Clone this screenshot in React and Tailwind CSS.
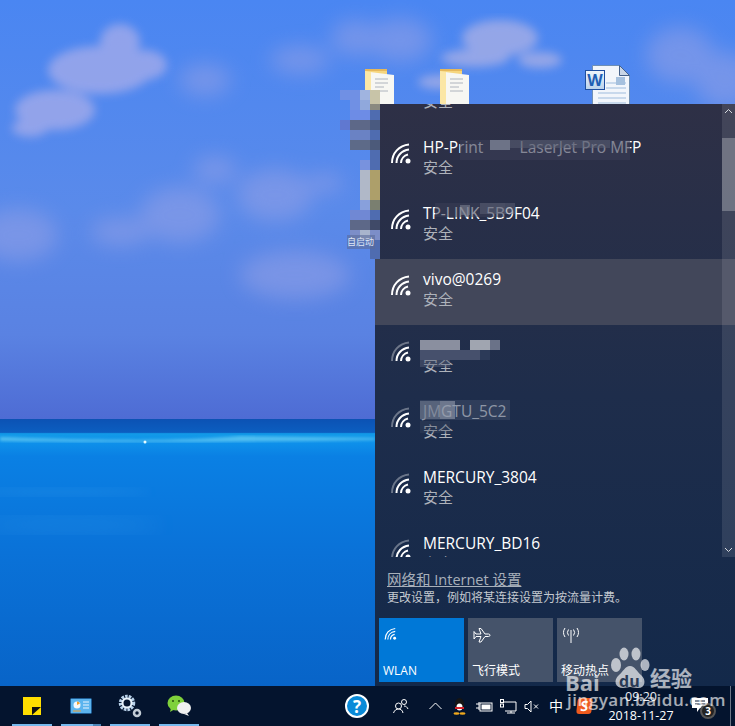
const FONT = { fontFamily: '"Open Sans","Noto Sans CJK SC",sans-serif' };

function Wifi({ level = 4, size = 22 }) {
  return (
    <svg width={size} height={size} viewBox="0 0 22 22" fill="none" stroke="white" strokeWidth="2">
      <path d="M2 21C2 11 9 3.500 19 2.500" opacity={level >= 4 ? 1 : 0.35} />
      <path d="M6.500 21C6.500 14 11.500 8.500 19 7.500" />
      <path d="M11 21C11 17 14 13.500 18 12.500" />
      <circle cx="18" cy="19" r="2.500" fill="white" stroke="none" />
    </svg>
  );
}

function Blocks({ items }) {
  return items.map(([x, y, w, h, c], i) => (
    <div key={i} className="absolute" style={{ left: x, top: y, width: w, height: h, background: c }} />
  ));
}

function Row({ name, level, active, blocks, dim }) {
  return (
    <div className={`relative flex h-[66px] shrink-0 items-start pl-[15px] pt-[9px] ${active ? "bg-[#42475a]" : ""}`}>
      <div className="mt-[6px] h-[22px] w-[22px]"><Wifi level={level} /></div>
      <div className="ml-[11px] flex flex-col">
        <span className={`h-[21px] whitespace-pre text-[15.500px] leading-[22px] ${dim ? "text-[#c8ccd4]" : "text-white"}`}>{name}</span>
        <span className="text-[15px] leading-[20px] text-[#aeb2ba]">安全</span>
      </div>
      {blocks && <Blocks items={blocks} />}
    </div>
  );
}

function Tile({ label, blue, children }) {
  return (
    <div className={`flex h-[64px] w-[85px] flex-col justify-between px-[4px] pb-[3px] pt-[9px] ${blue ? "bg-[#0078d7]" : "bg-[#45536a]"}`}>
      <div className="h-[24px] pl-[1px]">{children}</div>
      <span className="text-[12px] leading-[16px] text-white">{label}</span>
    </div>
  );
}

function TaskItem({ children, tail }) {
  return (
    <div className="relative flex h-10 w-[40px] items-center justify-center">
      {children}
      <div className="absolute bottom-0 left-0 h-[2px] w-full bg-[#76b9ed]" />
      {tail && <div className="absolute bottom-0 right-0 h-[2px] w-[8px] bg-[#4c86b8]" />}
    </div>
  );
}

function Folder() {
  return (
    <svg width="32" height="36" viewBox="0 0 32 36">
      <path d="M1 1h22v35H1z" fill="#f6d67e" />
      <path d="M1 1h22v2H1z" fill="#e6b85c" />
      <path d="M6 4l24 3v29H6z" fill="#f7f7f3" />
      <path d="M11 11h13M11 15h13M11 19h9M11 23h13" stroke="#aeb4bd" strokeWidth="1" />
      <path d="M1 3l6 1v32H1z" fill="#fbe7a6" />
    </svg>
  );
}

function Sky() {
  return (
    <svg className="absolute inset-0" width="735" height="686" viewBox="0 0 735 686">
      <defs>
        <linearGradient id="sky" x1="0" y1="0" x2="0" y2="1">
          <stop offset="0" stopColor="#4a86f2" />
          <stop offset="0.5" stopColor="#5a8aea" />
          <stop offset="0.8" stopColor="#5a82e2" />
          <stop offset="1" stopColor="#4e6cd4" />
        </linearGradient>
        <linearGradient id="sea" x1="0" y1="0" x2="0" y2="1">
          <stop offset="0" stopColor="#0c52b4" />
          <stop offset="0.05" stopColor="#0c5ec0" />
          <stop offset="0.055" stopColor="#129ae8" />
          <stop offset="0.09" stopColor="#0e90ea" />
          <stop offset="0.14" stopColor="#0a80e4" />
          <stop offset="0.5" stopColor="#0a72d8" />
          <stop offset="1" stopColor="#0864c8" />
        </linearGradient>
        <filter id="b1"><feGaussianBlur stdDeviation="10" /></filter>
        <filter id="b2"><feGaussianBlur stdDeviation="1.500" /></filter>
        <filter id="b3"><feGaussianBlur stdDeviation="5" /></filter>
      </defs>
      <rect width="735" height="419" fill="url(#sky)" />
      <rect y="419" width="735" height="267" fill="url(#sea)" />
      <g filter="url(#b3)" fill="#a2aaea" opacity="0.8">
        <ellipse cx="120" cy="42" rx="20" ry="18" />
        <ellipse cx="100" cy="70" rx="52" ry="24" />
        <ellipse cx="145" cy="65" rx="22" ry="15" />
        <ellipse cx="55" cy="110" rx="40" ry="20" />
        <ellipse cx="30" cy="128" rx="18" ry="9" />
      </g>
      <g filter="url(#b1)" fill="#8e9ee6" opacity="0.6">
        <ellipse cx="205" cy="80" rx="26" ry="16" />
        <ellipse cx="300" cy="60" rx="30" ry="14" />
        <ellipse cx="355" cy="38" rx="24" ry="18" />
        <ellipse cx="400" cy="40" rx="32" ry="22" />
        <ellipse cx="180" cy="215" rx="40" ry="28" />
        <ellipse cx="120" cy="232" rx="30" ry="14" />
        <ellipse cx="275" cy="195" rx="38" ry="26" />
        <ellipse cx="325" cy="183" rx="18" ry="10" />
        <ellipse cx="215" cy="170" rx="22" ry="14" />
        <ellipse cx="18" cy="235" rx="40" ry="26" />
        <ellipse cx="295" cy="275" rx="55" ry="24" />
        <ellipse cx="680" cy="55" rx="34" ry="28" />
        <ellipse cx="725" cy="80" rx="30" ry="28" />
      </g>
      <g filter="url(#b3)" fill="#a6aee6" opacity="0.8">
        <ellipse cx="500" cy="38" rx="38" ry="18" />
        <ellipse cx="475" cy="58" rx="34" ry="9" />
        <ellipse cx="540" cy="60" rx="22" ry="8" />
        <ellipse cx="440" cy="82" rx="22" ry="7" />
      </g>
      <path d="M0 437C120 441 180 441 240 436L375 438V440C250 442 100 443 0 441z" fill="#7fdcf6" opacity="0.6" filter="url(#b2)" />
      <ellipse cx="60" cy="492" rx="90" ry="4" fill="#3a9cea" opacity="0.25" filter="url(#b3)" />
      <ellipse cx="70" cy="525" rx="90" ry="8" fill="#3a9cea" opacity="0.25" filter="url(#b1)" />
      <circle cx="145" cy="442" r="1.500" fill="#e6fbff" />
    </svg>
  );
}

function Mosaic() {
  const cells = [
    [370, 104, 10, 155, "#4f6cb0"],
    [340, 90, 20, 10, "#7090e4"],[360, 90, 10, 10, "#a0b4e0"],[370, 90, 10, 14, "#c8c4a8"],
    [350, 100, 10, 10, "#7090e4"],[360, 100, 10, 10, "#90a8dc"],[370, 104, 10, 6, "#8a8a80"],
    [350, 110, 20, 10, "#6d8ce6"],[340, 120, 10, 10, "#6078d0"],[350, 120, 20, 10, "#5d6888"],[370, 120, 10, 10, "#4a5a80"],
    [350, 130, 20, 10, "#6a82c4"],[350, 140, 20, 10, "#5d6a88"],[370, 140, 10, 10, "#4c5a7a"],
    [360, 160, 10, 10, "#7892de"],[360, 170, 10, 30, "#b0b8c8"],[370, 170, 10, 30, "#ad9f6a"],
    [360, 200, 10, 10, "#88a0dc"],[370, 200, 10, 10, "#7a7f70"],[350, 210, 20, 10, "#7088d4"],
    [350, 220, 20, 10, "#5d6888"],[370, 220, 10, 10, "#404a68"],
    [350, 230, 10, 10, "#7c8ec8"],[360, 230, 10, 10, "#a8b4cc"],[370, 230, 10, 10, "#7c8ec8"],
  ];
  return <Blocks items={cells} />;
}

export default function App() {
  return (
    <div className="relative flex h-[726px] w-[735px] flex-col overflow-hidden" style={FONT}>
      <div className="relative h-[686px] w-full shrink-0">
        <Sky />
        <div className="absolute left-[364px] top-[68px]"><Folder /></div>
        <div className="absolute left-[439px] top-[68px]"><Folder /></div>
        <div className="absolute left-[585px] top-[65px] h-[40px] w-[44px]">
          <svg className="absolute left-[7px] top-0" width="38" height="40" viewBox="0 0 38 40">
            <path d="M.5.5h27l10 10V40H.5z" fill="#f2f6fb" stroke="#6f8fb4" />
            <path d="M27.500.5v10h10z" fill="#c9d6e6" stroke="#46628a" />
            <path d="M14 18h20M14 23h20M6 28h28M6 33h28M6 38h28" stroke="#9dbbdd" strokeWidth="1.200" />
            <rect x="24" y="12" width="9" height="8" fill="#a6c1de" />
          </svg>
          <div className="absolute left-0 top-[5px] flex h-[20px] w-[20px] items-center justify-center border border-[#1f4e9e] bg-gradient-to-b from-[#eef4fb] to-[#bcd3ec] text-[16px] font-bold leading-none text-[#1f5fb4]">W</div>
        </div>

        <div className="absolute bottom-0 right-0 top-[104px] flex w-[360px] flex-col bg-gradient-to-b from-[#2e3046] via-[#1e2d4b] to-[#13294a]">
          <div className="relative h-[453px] shrink-0 overflow-hidden">
            <div className="pr-[13px]">
              <div className="h-[23px] overflow-hidden pl-[48px] text-[15px] leading-[20px] text-[#aeb2ba]">
                <div className="-mt-[13px]">安全</div>
              </div>
              <Row name="HP-Print         LaserJet Pro MFP" blocks={[[85, 13, 170, 20, "rgba(58,62,86,.62)"],[115, 13, 20, 10, "#6d7387"],[135, 13, 100, 8, "rgba(90,95,115,.5)"]]} />
              <Row name="TP-LINK_5B9F04" blocks={[[60, 10, 70, 14, "rgba(58,62,86,.55)"],[85, 12, 10, 10, "rgba(130,135,150,.55)"],[105, 10, 35, 11, "rgba(100,105,125,.45)"]]} />
              <div className="relative -mr-[13px]"><Row name="vivo@0269" active /></div>
              <Row name="" level={3} blocks={[[45, 15, 40, 10, "#8a8f9f"],[95, 15, 20, 10, "#a0a5b0"],[115, 15, 10, 10, "#6a7288"],[45, 25, 60, 10, "#46506c"],[105, 25, 10, 10, "#2c3a58"],[45, 35, 30, 7, "rgba(90,100,125,.45)"]]} />
              <Row name="JMGTU_5C2" level={3} dim blocks={[[45, 9, 90, 20, "rgba(72,84,110,.45)"],[45, 10, 20, 18, "rgba(120,130,150,.55)"],[65, 10, 15, 18, "rgba(150,158,175,.6)"],[45, 30, 30, 12, "rgba(60,72,98,.35)"]]} />
              <Row name="MERCURY_3804" level={3} />
              <Row name="MERCURY_BD16" level={3} />
            </div>
            <div className="absolute bottom-0 right-0 top-0 flex w-[13px] flex-col items-center justify-between bg-white/10 py-[3px] text-white">
              <svg width="9" height="9" viewBox="0 0 9 9" fill="none" stroke="#d5d8de"><path d="M1 6l3.500-3.500L8 6" /></svg>
              <svg width="9" height="9" viewBox="0 0 9 9" fill="none" stroke="#d5d8de"><path d="M1 3l3.500 3.500L8 3" /></svg>
              <div className="absolute left-0 top-[34px] h-[73px] w-full bg-white/25" />
            </div>
          </div>
          <div className="pl-[12px] pt-[12px]">
            <div className="h-[21px] text-[14.500px] leading-[22px] text-[#a8b0ba] underline">网络和 Internet 设置</div>
            <div className="text-[12px] leading-[16px] text-[#c4c9d0]">更改设置，例如将某连接设置为按流量计费。</div>
          </div>
          <div className="mt-[12px] flex gap-[4px] pl-[4px]">
            <Tile label="WLAN" blue><Wifi size={13} /></Tile>
            <Tile label="飞行模式">
              <svg width="18" height="16" viewBox="0 0 18 16" fill="none" stroke="white"><path d="M1 4.500l2 2.500h5L6 1.500h2L12 7h3.500c2 0 2 2.500 0 2.500H12L8 15H6l2-5.500H3L1 12z" /></svg>
            </Tile>
            <Tile label="移动热点">
              <svg width="18" height="16" viewBox="0 0 18 16" fill="none" stroke="white"><path d="M9 3v13M6.500 2.500a5 5 0 000 6M11.500 2.500a5 5 0 010 6M3 1a8 8 0 000 9M15 1a8 8 0 010 9" /></svg>
            </Tile>
          </div>
        </div>
        <Mosaic />
        <div className="absolute left-[347px] top-[235px] h-[14px] w-[28px] overflow-hidden whitespace-nowrap bg-[#5a6a9a]/60 text-[9px] leading-[14px] text-[#dfe6f5]">自启动</div>
      </div>

      <div className="relative flex h-10 w-full items-center bg-[#04142e] text-white">
        <div className="ml-[12px] flex gap-[9px]">
          <TaskItem>
            <svg width="18" height="18" viewBox="0 0 18 18"><rect width="18" height="18" fill="#ffde00" /><path d="M9 18v-8h9z" fill="#111" /></svg>
          </TaskItem>
          <TaskItem tail>
            <svg width="22" height="16" viewBox="0 0 22 16"><rect x=".5" y=".5" width="21" height="15" rx="1" fill="#5cb4ee" stroke="#1e5c94" /><circle cx="7" cy="7" r="3.500" fill="#f4f8fc" /><path d="M7 7V3.500A3.500 3.500 0 0110 5.500z" fill="#f0a030" /><path d="M13 4h6M13 7h6M13 10h6" stroke="#e8f4ff" /><path d="M3 13h8" stroke="#f0a030" /></svg>
          </TaskItem>
          <TaskItem>
            <svg width="26" height="26" viewBox="0 0 26 26" fill="none"><circle cx="10" cy="10" r="6.500" stroke="#b9d2ea" strokeWidth="3.500" strokeDasharray="2.500 1" /><circle cx="10" cy="10" r="4.500" stroke="#e8f2fb" strokeWidth="2" /><circle cx="20" cy="20" r="3" stroke="#c3ccd6" strokeWidth="2.500" /></svg>
          </TaskItem>
          <TaskItem>
            <svg width="25" height="22" viewBox="0 0 25 22"><ellipse cx="9" cy="8" rx="8.500" ry="7.500" fill="#7fd13b" /><path d="M4 13l-1 4 5-3z" fill="#7fd13b" /><ellipse cx="17" cy="13" rx="7" ry="6" fill="#f0f0f0" /><path d="M20 18l2 3-5-2z" fill="#f0f0f0" /><circle cx="6" cy="6" r="1" fill="#27500e" /><circle cx="12" cy="6" r="1" fill="#27500e" /></svg>
          </TaskItem>
        </div>
        <div className="ml-[146px] flex h-[24px] w-[24px] items-center justify-center rounded-full border-2 border-white bg-[#0a8ad8] text-[17px] font-bold leading-none">?</div>
        <svg className="ml-[24px]" width="16" height="16" viewBox="0 0 16 16" fill="none" stroke="white"><circle cx="5.500" cy="8" r="3" /><path d="M.5 15c1-3 3-4 5-4s4 1 4.500 4" /><circle cx="11" cy="4" r="2.500" /><path d="M11 8c2 0 3 1 4 3" /></svg>
        <svg className="ml-[20px]" width="13" height="8" viewBox="0 0 13 8" fill="none" stroke="white"><path d="M.5 7l6-6 6 6" /></svg>
        <svg className="ml-[10px]" width="15" height="17" viewBox="0 0 15 17"><ellipse cx="7.500" cy="6" rx="4.500" ry="6" fill="#151515" /><ellipse cx="7.500" cy="9" rx="3" ry="3.500" fill="#fff" /><path d="M3 9h9v2H3z" fill="#d8222a" /><ellipse cx="4.500" cy="15.500" rx="3" ry="1.300" fill="#f0a81c" /><ellipse cx="10.500" cy="15.500" rx="3" ry="1.300" fill="#f0a81c" /></svg>
        <svg className="ml-[9px]" width="17" height="13" viewBox="0 0 17 13" fill="none" stroke="white"><rect x="4" y="3" width="12" height="8" /><rect x="6" y="5" width="8" height="4" fill="white" /><path d="M0 4h3M0 8h3M3 2v8" /></svg>
        <svg className="ml-[7px]" width="17" height="15" viewBox="0 0 17 15" fill="none" stroke="white"><path d="M2 3h14v9H5" /><path d="M11 12v2M7 14h8" /><rect x=".5" y=".5" width="3" height="3" fill="#04142e" /><rect x=".5" y="5" width="3" height="3" fill="#04142e" /></svg>
        <svg className="ml-[7px]" width="15" height="13" viewBox="0 0 15 13" fill="none" stroke="white"><path d="M1 4.500h2.500L7 1v11L3.500 8.500H1z" /><path d="M10 4.500l4 4M14 4.500l-4 4" /></svg>
        <span className="ml-[10px] text-[14px] leading-none">中</span>
        <div className="ml-[14px] flex h-[16px] w-[15px] -skew-x-6 items-center justify-center rounded-[3px] bg-[#ee5a1e] text-[14px] font-bold leading-none">S</div>
        <div className="ml-[15px] flex w-[68px] flex-col items-center text-[12.500px] leading-[19px]">
          <span className="-mt-[1px] h-[19px] text-[#e8ecf2]">09:20</span>
          <span>2018-11-27</span>
        </div>
        <div className="relative ml-[17px] h-[16px] w-[16px]">
          <svg width="16" height="14" viewBox="0 0 16 14" fill="white"><path d="M0 0h16v10H8l-3 4v-4H0z" /><path d="M3 3h10M3 6h10" stroke="#04142e" /></svg>
          <div className="absolute -bottom-[5px] -right-[8px] flex h-[16px] w-[16px] items-center justify-center rounded-full border-2 border-[#555] bg-[#222] text-[10px] font-bold leading-none">3</div>
        </div>
        <div className="absolute bottom-0 right-[4px] top-0 w-[1px] bg-[#6c7686]" />
      </div>

      <div className="pointer-events-none absolute left-[565px] top-[645px] h-[75px] w-[170px] text-white/65">
        <svg className="absolute left-[45px] top-[2px]" width="40" height="46" viewBox="0 0 40 46" fill="currentColor"><ellipse cx="6" cy="18" rx="5" ry="7" /><ellipse cx="14" cy="7" rx="4.500" ry="6.500" /><ellipse cx="26" cy="7" rx="4.500" ry="6.500" /><ellipse cx="35" cy="18" rx="4.500" ry="6" /><path d="M20 19c5 0 7 6 11 9 6 5 4 14-4 13-3 0-5-1-7-1s-4 1-7 1c-8 0-10-8-4-13 4-3 6-9 11-9z" /></svg>
        <span className="absolute left-0 top-[26px] text-[22px] font-bold leading-none">Bai</span>
        <span className="absolute left-[54px] top-[28px] text-[16px] font-bold leading-none text-[#2a3a55]">du</span>
        <span className="absolute left-[85px] top-[23px] text-[21px] font-bold leading-none">经验</span>
        <span className="absolute left-[2px] top-[46px] text-[17px] font-semibold leading-none tracking-[0.500px]">jingyan.baidu.com</span>
      </div>
    </div>
  );
}
